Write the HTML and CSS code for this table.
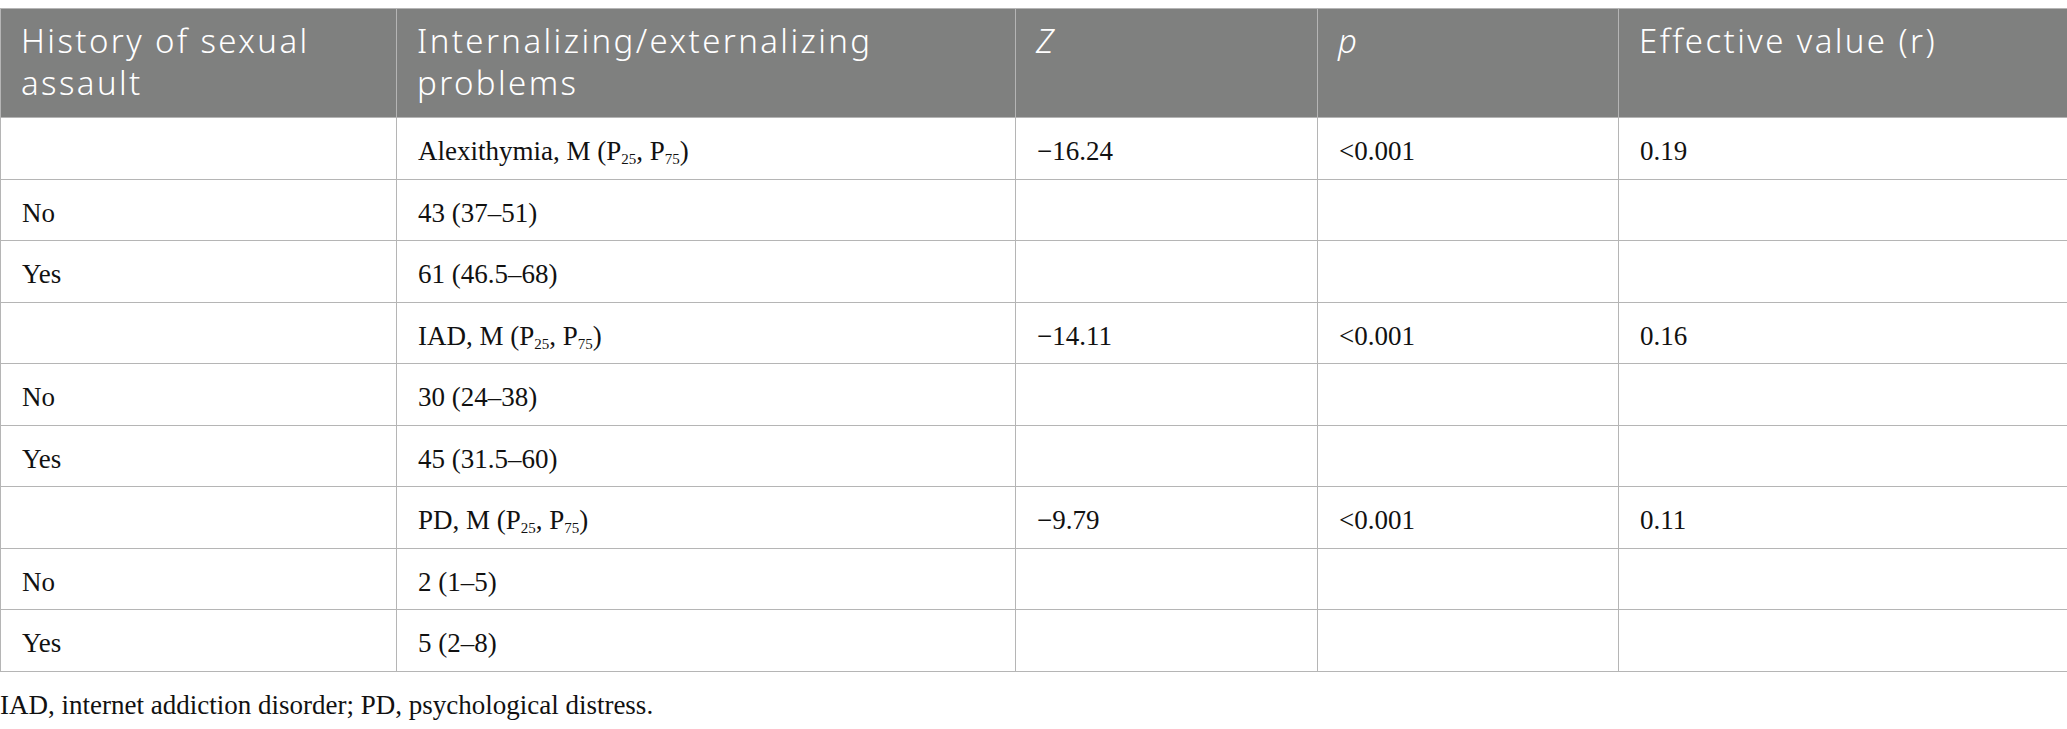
FILE: index.html
```html
<!DOCTYPE html>
<html lang="en">
<head>
<meta charset="utf-8">
<title>Table</title>
<link rel="stylesheet" href="styles.css">
</head>
<body>
<table class="data">
  <colgroup>
    <col class="c1"><col class="c2"><col class="c3"><col class="c4"><col class="c5">
  </colgroup>
  <thead>
    <tr>
      <th>History of sexual assault</th>
      <th>Internalizing/externalizing problems</th>
      <th><i>Z</i></th>
      <th><i>p</i></th>
      <th>Effective value (r)</th>
    </tr>
  </thead>
  <tbody>
    <tr><td></td><td>Alexithymia, M (P<sub>25</sub>, P<sub>75</sub>)</td><td>−16.24</td><td>&lt;0.001</td><td>0.19</td></tr>
    <tr><td>No</td><td>43 (37–51)</td><td></td><td></td><td></td></tr>
    <tr><td>Yes</td><td>61 (46.5–68)</td><td></td><td></td><td></td></tr>
    <tr><td></td><td>IAD, M (P<sub>25</sub>, P<sub>75</sub>)</td><td>−14.11</td><td>&lt;0.001</td><td>0.16</td></tr>
    <tr><td>No</td><td>30 (24–38)</td><td></td><td></td><td></td></tr>
    <tr><td>Yes</td><td>45 (31.5–60)</td><td></td><td></td><td></td></tr>
    <tr><td></td><td>PD, M (P<sub>25</sub>, P<sub>75</sub>)</td><td>−9.79</td><td>&lt;0.001</td><td>0.11</td></tr>
    <tr><td>No</td><td>2 (1–5)</td><td></td><td></td><td></td></tr>
    <tr><td>Yes</td><td>5 (2–8)</td><td></td><td></td><td></td></tr>
  </tbody>
</table>
<p class="note">IAD, internet addiction disorder; PD, psychological distress.</p>
</body>
</html>
```

FILE: styles.css
```css
html, body {
  margin: 0;
  padding: 0;
  background: #ffffff;
}
body {
  padding-top: 8px;
  font-family: "Liberation Serif", "Times New Roman", serif;
  color: #111111;
}
.data {
  width: 2067px;
  border-collapse: collapse;
  table-layout: fixed;
}
.c1 { width: 396px; }
.c2 { width: 619px; }
.c3 { width: 302px; }
.c4 { width: 301px; }
.c5 { width: 449px; }

.data th {
  background: #7f807f;
  color: #ffffff;
  font-family: "Noto Sans", "Open Sans", sans-serif;
  font-weight: 350;
  font-size: 33px;
  letter-spacing: 2.4px;
  line-height: 41.7px;
  text-align: left;
  vertical-align: top;
  padding: 11px 20px 14px 20px;
  border: 1px solid #b5b5b5;
}
.data th i { font-style: italic; }

.data td {
  height: 61.5px;
  box-sizing: border-box;
  font-size: 27px;
  line-height: 30px;
  padding: 18px 20px 12px 21px;
  vertical-align: top;
  border: 1px solid #b5b5b5;
  white-space: nowrap;
}
.data sub {
  font-size: 15px;
  line-height: 0;
  vertical-align: -4px;
}
.note {
  margin: 18px 0 0 0;
  font-size: 27px;
  line-height: 30px;
  color: #111111;
}
```
